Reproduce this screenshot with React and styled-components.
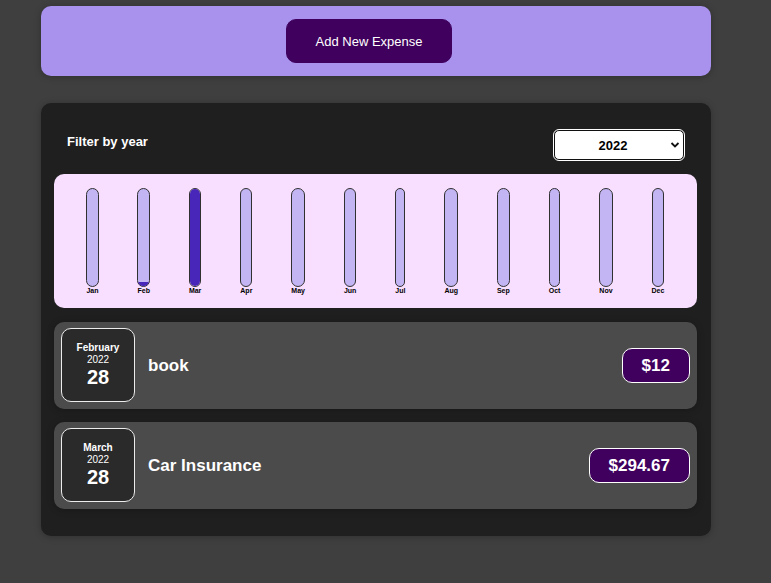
import React, { useState } from "react";
import styled, { createGlobalStyle } from "styled-components";

const GlobalStyle = createGlobalStyle`
  * { box-sizing: border-box; }
  body {
    margin: 0;
    background: #3f3f3f;
    font-family: "Liberation Sans", Arial, sans-serif;
    color: #fff;
  }
  h2, ul { margin: 0; padding: 0; }
`;

const Page = styled.main`
  display: flex;
  flex-direction: column;
  gap: 27px;
  padding: 6px 60px 40px 41px;
`;

const Card = styled.section`
  border-radius: 10px;
  box-shadow: 0 1px 7px rgba(0, 0, 0, 0.25);
`;

const NewExpense = styled(Card)`
  display: flex;
  justify-content: center;
  padding: 13px 27px 13px 13px;
  background: #a892ee;
`;

const AddButton = styled.button`
  height: 44px;
  padding: 0 29px;
  border: 1px solid #40005d;
  border-radius: 10px;
  background: #40005d;
  color: #fff;
  font: 13px "Liberation Sans", Arial, sans-serif;
  cursor: pointer;
`;

const Expenses = styled(Card)`
  padding: 13px 14px 27px 13px;
  background: #1f1f1f;
`;

const Filter = styled.div`
  display: flex;
  justify-content: space-between;
  align-items: center;
  padding: 14px 13px;
`;

const FilterLabel = styled.label`
  padding-bottom: 6px;
  font-size: 13px;
  line-height: 16px;
  font-weight: bold;
`;

const SelectWrap = styled.div`
  display: grid;
  align-items: center;
  width: 130px;
`;

const YearSelect = styled.select`
  grid-area: 1 / 1;
  height: 30px;
  padding: 0 12px 0 0;
  appearance: none;
  border: 1px solid #101010;
  border-radius: 5px;
  outline: 1px solid #fff;
  background: #fff;
  color: #000;
  font: bold 13px "Liberation Sans", Arial, sans-serif;
  text-align: center;
  text-align-last: center;
`;

const Chevron = styled.svg`
  grid-area: 1 / 1;
  justify-self: end;
  margin-right: 4px;
  pointer-events: none;
`;

const Chart = styled.div`
  display: flex;
  justify-content: space-around;
  padding: 14px 13px 13px;
  border-radius: 10px;
  background: #f8dfff;
`;

const ChartBar = styled.div`
  display: flex;
  flex-direction: column;
`;

const BarTrack = styled.div`
  display: flex;
  flex-direction: column;
  justify-content: flex-end;
  height: 99px;
  border: 1px solid #313131;
  border-radius: 10px;
  overflow: hidden;
  background: #c3b4f3;
`;

const BarFill = styled.div`
  background: #4826b9;
`;

const BarLabel = styled.div`
  color: #000;
  font-size: 7px;
  line-height: 8px;
  font-weight: bold;
`;

const List = styled.ul`
  display: flex;
  flex-direction: column;
  gap: 13px;
  padding-top: 14px;
  list-style: none;
`;

const Item = styled.li`
  display: flex;
  align-items: center;
  gap: 13px;
  padding: 6px 7px 7px;
  border-radius: 10px;
  background: #4b4b4b;
  box-shadow: 0 1px 7px rgba(0, 0, 0, 0.25);
`;

const DateBox = styled.div`
  display: flex;
  flex-direction: column;
  align-items: center;
  justify-content: center;
  width: 74px;
  height: 74px;
  border: 1px solid #ececec;
  border-radius: 10px;
  background: #2a2a2a;
  font-size: 10px;
  line-height: 12px;
`;

const Month = styled.div`
  font-weight: bold;
`;

const Day = styled.div`
  font-size: 20px;
  line-height: 23px;
  font-weight: bold;
`;

const Title = styled.h2`
  flex: 1;
  font-size: 17px;
  line-height: 21px;
`;

const Price = styled.div`
  padding: 6px 19px;
  border: 1px solid #fff;
  border-radius: 10px;
  background: #40005d;
  font-size: 17px;
  line-height: 21px;
  font-weight: bold;
`;

const MONTHS = ["Jan", "Feb", "Mar", "Apr", "May", "Jun", "Jul", "Aug", "Sep", "Oct", "Nov", "Dec"];

const EXPENSES = [
  { title: "book", amount: 12, month: "February", year: 2022, day: 28 },
  { title: "Car Insurance", amount: 294.67, month: "March", year: 2022, day: 28 },
];

export default function App() {
  const [year, setYear] = useState("2022");
  const shown = EXPENSES.filter((e) => String(e.year) === year);
  const totals = MONTHS.map((m) =>
    shown.filter((e) => e.month.startsWith(m)).reduce((sum, e) => sum + e.amount, 0)
  );
  const max = Math.max(...totals);

  return (
    <>
      <GlobalStyle />
      <Page>
        <NewExpense>
          <AddButton type="button">Add New Expense</AddButton>
        </NewExpense>
        <Expenses>
          <Filter>
            <FilterLabel htmlFor="year">Filter by year</FilterLabel>
            <SelectWrap>
              <YearSelect id="year" value={year} onChange={(e) => setYear(e.target.value)}>
                <option value="2022">2022</option>
                <option value="2021">2021</option>
                <option value="2020">2020</option>
                <option value="2019">2019</option>
              </YearSelect>
              <Chevron width="10" height="8" viewBox="0 0 10 8" aria-hidden="true">
                <path d="M1.5 2 L5 5.5 L8.5 2" fill="none" stroke="#101010" strokeWidth="1.8" />
              </Chevron>
            </SelectWrap>
          </Filter>
          <Chart>
            {MONTHS.map((m, i) => (
              <ChartBar key={m}>
                <BarTrack>
                  <BarFill style={{ height: max ? `${Math.round((totals[i] / max) * 100)}%` : "0%" }} />
                </BarTrack>
                <BarLabel>{m}</BarLabel>
              </ChartBar>
            ))}
          </Chart>
          <List>
            {shown.map((e) => (
              <Item key={e.title}>
                <DateBox>
                  <Month>{e.month}</Month>
                  <div>{e.year}</div>
                  <Day>{e.day}</Day>
                </DateBox>
                <Title>{e.title}</Title>
                <Price>${e.amount}</Price>
              </Item>
            ))}
          </List>
        </Expenses>
      </Page>
    </>
  );
}
